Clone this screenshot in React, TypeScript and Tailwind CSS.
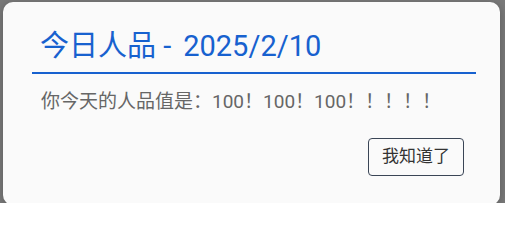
import React from "react";

export default function App() {
  return (
    <div
      className="w-[505px] h-[203px] overflow-hidden bg-[#797979] pl-[3px] pt-[2px]"
      style={{ fontFamily: 'Roboto, "Noto Sans CJK SC", sans-serif' }}
    >
      <div className="w-[497px] h-[203px] bg-[#fafafa] rounded-[10px] pt-[24px] shadow-[0_2px_8px_rgba(0,0,0,0.25)]">
        <div className="ml-[29px] w-[444px] border-b-2 border-[#1761cf] pl-[8px] pb-[6px]">
          <div className="text-[29px] leading-[40px] text-[#1761cf] whitespace-nowrap">
            今日人品 -<span className="ml-[12px]">2025/2/10</span>
          </div>
        </div>
        <div className="mt-[14px] pl-[38px] text-[19px] leading-[28px] text-[#666666] whitespace-nowrap">
          你今天的人品值是：100！100！100！！！！！
        </div>
        <div className="mt-[22px] flex justify-end pr-[36px]">
          <button className="h-[38px] w-[96px] rounded-[4px] border border-[#3a4556] bg-transparent text-[17px] text-[#333333] flex items-center justify-center">
            我知道了
          </button>
        </div>
      </div>
    </div>
  );
}
